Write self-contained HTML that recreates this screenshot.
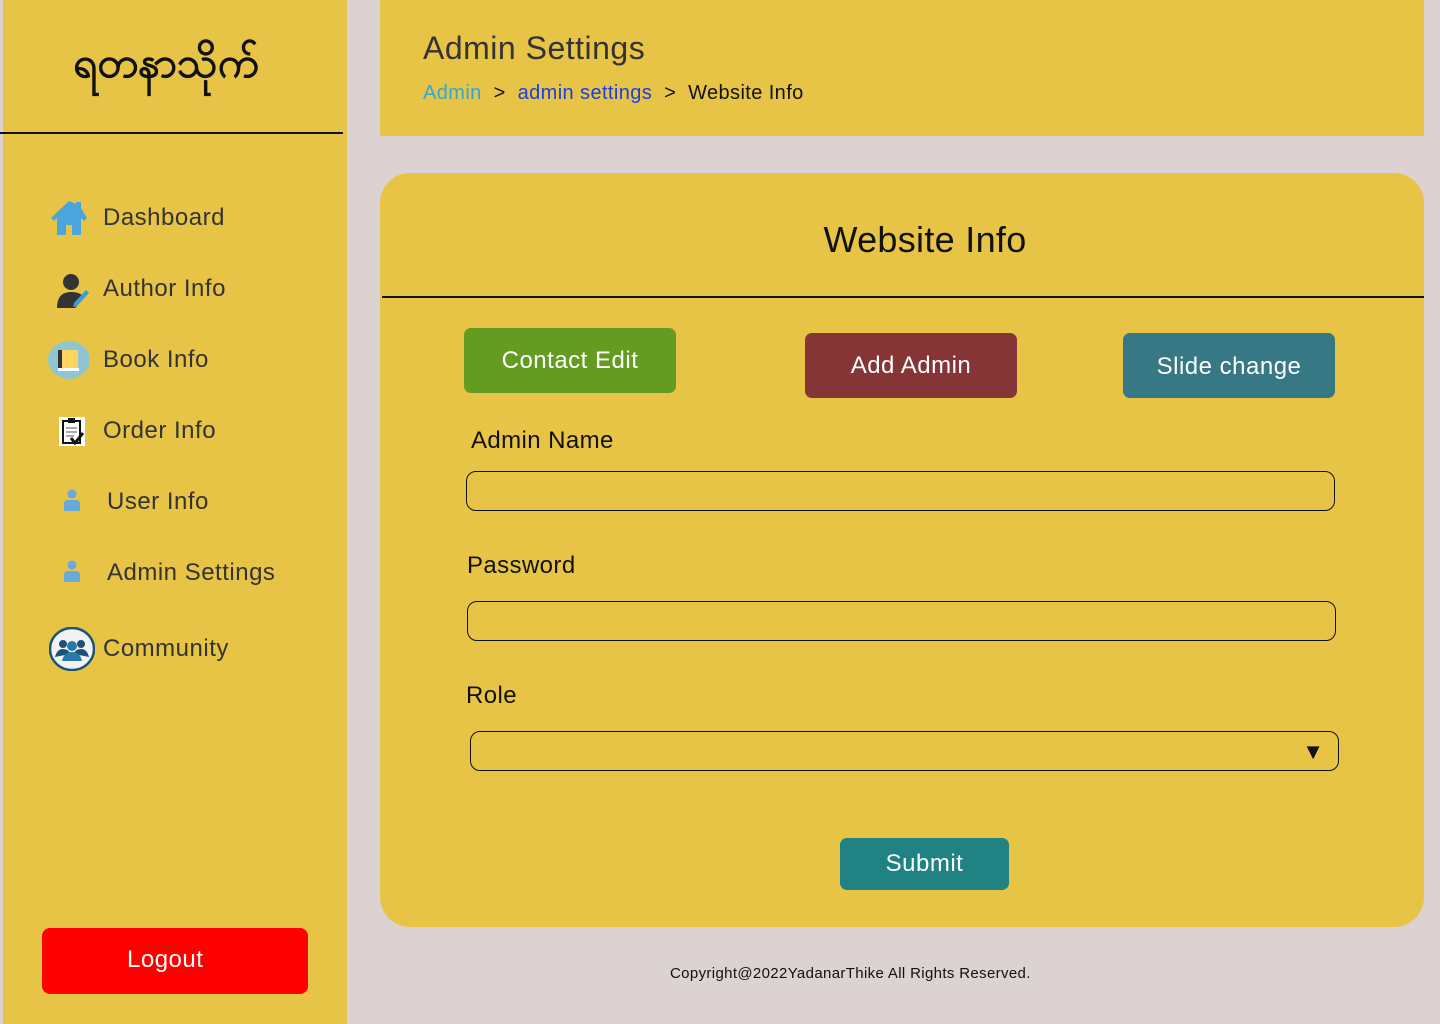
<!DOCTYPE html>
<html><head><meta charset="utf-8"><style>
*{margin:0;padding:0;box-sizing:border-box}
body{width:1440px;height:1024px;background:#dbd2d1;font-family:"Liberation Sans",sans-serif;position:relative;overflow:hidden;color:#222}
.sb{position:absolute;left:3px;top:0;width:344px;height:1024px;background:#e7c446}
.logo{position:absolute;left:70px;top:36px;font-size:42px;color:#111;font-weight:bold}
.hr1{position:absolute;left:0;top:132px;width:343px;height:1.5px;background:#111}
.nav{position:absolute;left:103px;font-size:24px;color:#333;letter-spacing:0.5px}
.ic{position:absolute}
.logout{position:absolute;left:42px;top:928px;width:266px;height:66px;background:#fe0000;border-radius:8px;color:#fff;font-size:24px;line-height:64px;padding-left:85px;letter-spacing:0.5px}
.top{position:absolute;left:380px;top:0;width:1044px;height:136px;background:#e7c446}
.top h1{position:absolute;left:43px;top:30px;font-size:32px;font-weight:normal;color:#333;letter-spacing:0.5px}
.bc{position:absolute;left:43px;top:82px;font-size:20px;color:#111;letter-spacing:0.4px}
.card{position:absolute;left:380px;top:173px;width:1044px;height:754px;background:#e7c446;border-radius:30px}
.card h2{position:absolute;left:0;width:1090px;text-align:center;top:46px;font-size:36px;font-weight:normal;color:#111;letter-spacing:0.3px}
.hr2{position:absolute;left:2px;top:123px;width:1042px;height:1.5px;background:#111}
.btn{position:absolute;color:#fff;font-size:24px;text-align:center;border-radius:7px;letter-spacing:0.5px}
.lbl{position:absolute;font-size:24px;color:#111;letter-spacing:0.4px}
.inp{position:absolute;height:40px;border:1.5px solid #111;border-radius:10px}
.foot{position:absolute;left:670px;top:965px;font-size:15px;color:#111;letter-spacing:0.35px}
</style></head><body>
<div class="sb">
<div class="logo">ရတနာသိုက်</div>
</div>
<div class="hr1"></div>
<svg class="ic" style="left:50px;top:199px" width="38" height="38" viewBox="0 0 38 38"><path d="M19 2L1 19l3 3 3-3v17h9v-10h6v10h9V19l3 3 3-3L31 9V3h-5v2z" fill="#4aa5dc"/></svg>
<div class="nav" style="top:204px">Dashboard</div>
<svg class="ic" style="left:55px;top:272px" width="34" height="36" viewBox="0 0 34 36"><circle cx="16" cy="10" r="8" fill="#333"/><path d="M2 36c0-12 6-16 14-16s12 3 13 6L20 36z" fill="#333"/><path d="M31 18l3 3-12 13-4 1 1-4z" fill="#3a9fd0"/></svg>
<div class="nav" style="top:275px">Author Info</div>
<svg class="ic" style="left:48px;top:341px" width="42" height="38"><ellipse cx="21" cy="19" rx="21" ry="19" fill="#8ec7d2"/><rect x="12" y="9" width="18" height="19" fill="#ffd460"/><rect x="10" y="9" width="4" height="20" fill="#333"/><rect x="10" y="27" width="21" height="3" fill="#fff"/></svg>
<div class="nav" style="top:346px">Book Info</div>
<svg class="ic" style="left:59px;top:417px" width="26" height="29"><rect width="26" height="29" fill="#fff"/><rect x="4" y="4" width="17" height="22" fill="none" stroke="#111" stroke-width="2"/><rect x="9" y="1" width="7" height="5" fill="#111"/><path d="M7 11h11M7 15h11M7 19h8" stroke="#555"/><path d="M12 21l4 5 8-10" stroke="#111" stroke-width="3" fill="none"/></svg>
<div class="nav" style="top:417px">Order Info</div>
<svg class="ic" style="left:64px;top:489px" width="16" height="22"><circle cx="8" cy="5" r="4.5" fill="#6aa9dc"/><path d="M0 22v-7q0-4 4-4h8q4 0 4 4v7z" fill="#6aa9dc"/></svg>
<div class="nav" style="top:488px;left:107px">User Info</div>
<svg class="ic" style="left:64px;top:560px" width="16" height="22"><circle cx="8" cy="5" r="4.5" fill="#6aa9dc"/><path d="M0 22v-7q0-4 4-4h8q4 0 4 4v7z" fill="#6aa9dc"/></svg>
<div class="nav" style="top:559px;left:107px">Admin Settings</div>
<svg class="ic" style="left:49px;top:627px" width="46" height="44"><ellipse cx="23" cy="22" rx="22" ry="21" fill="#f2f2f2" stroke="#1c5378" stroke-width="2.5"/><circle cx="14" cy="17" r="4" fill="#1c5378"/><circle cx="32" cy="17" r="4" fill="#1c5378"/><circle cx="23" cy="19" r="5" fill="#2a78a8"/><path d="M6 30q2-8 8-8t7 5zM40 30q-2-8-8-8t-7 5z" fill="#1c5378"/><path d="M13 34q2-9 10-9t10 9z" fill="#2a78a8"/></svg>
<div class="nav" style="top:635px">Community</div>
<div class="logout">Logout</div>

<div class="top"><h1>Admin Settings</h1>
<div class="bc"><span style="color:#2fa8d8">Admin</span> &nbsp;&gt;&nbsp; <span style="color:#1a3ee0">admin settings</span> &nbsp;&gt;&nbsp; Website Info</div></div>

<div class="card">
<h2>Website Info</h2>
<div class="hr2"></div>
<div class="btn" style="left:84px;top:155px;width:212px;height:65px;line-height:65px;background:#639c21">Contact Edit</div>
<div class="btn" style="left:425px;top:160px;width:212px;height:65px;line-height:65px;background:#853535">Add Admin</div>
<div class="btn" style="left:743px;top:160px;width:212px;height:65px;line-height:67px;background:#367884">Slide change</div>
<div class="lbl" style="left:91px;top:254px">Admin Name</div>
<div class="inp" style="left:86px;top:298px;width:869px"></div>
<div class="lbl" style="left:87px;top:379px">Password</div>
<div class="inp" style="left:87px;top:428px;width:869px"></div>
<div class="lbl" style="left:86px;top:509px">Role</div>
<div class="inp" style="left:90px;top:558px;width:869px"><span style="position:absolute;right:14px;top:7px;font-size:22px;color:#111">▼</span></div>
<div class="btn" style="left:460px;top:665px;width:169px;height:52px;line-height:52px;background:#208283">Submit</div>
</div>
<div class="foot">Copyright@2022YadanarThike All Rights Reserved.</div>
</body></html>
